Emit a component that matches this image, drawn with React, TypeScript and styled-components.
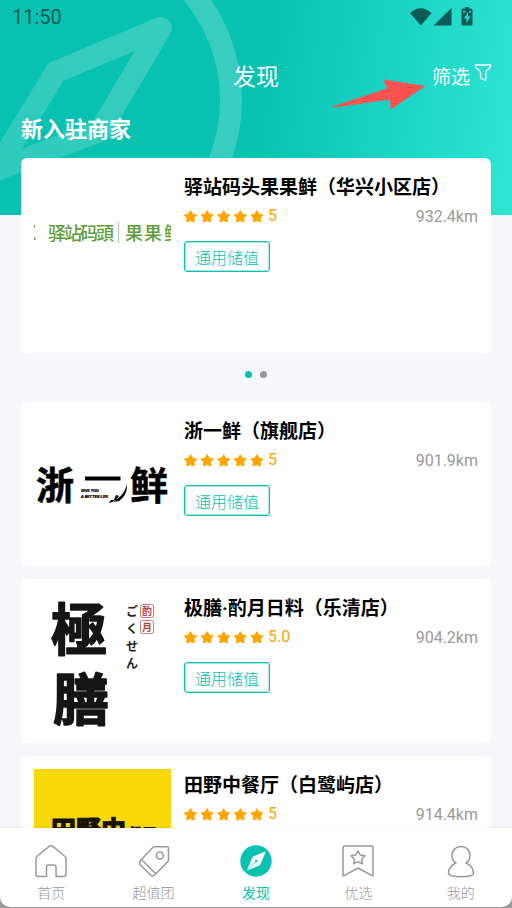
import React, { ReactNode, useState } from "react";
import styled, { createGlobalStyle } from "styled-components";

const teal = "#07c1b1";
const amber = "#ffa500";
const grey = "#999999";
const ink = "#0d5b54";

const GlobalStyle = createGlobalStyle`
  * { box-sizing: border-box; }
  html, body { margin: 0; padding: 0; }
  body {
    background: #9a9a9a;
    color: #000;
    font-family: Roboto, "Noto Sans CJK SC", sans-serif;
  }
  button {
    margin: 0;
    padding: 0;
    border: 0;
    background: none;
    color: inherit;
    font: inherit;
    cursor: pointer;
  }
`;

const Screen = styled.div`
  display: flex;
  flex-direction: column;
  height: 100vh;
  overflow: hidden;
`;

const Scroller = styled.main`
  position: relative;
  flex: 1;
  min-height: 0;
  overflow: hidden;
  background:
    linear-gradient(98deg, ${teal} 50%, #2de4d3 97%) top / 100% 215px no-repeat,
    #f6f6fb;
`;

const Compass = styled.svg`
  position: absolute;
  top: 0;
  left: 0;
  display: block;
`;

const PointerArrow = styled.svg`
  position: absolute;
  top: 78px;
  right: 86px;
  display: block;
  pointer-events: none;
`;

const Content = styled.div`
  position: relative;
  padding: 0 21px;
`;

const StatusBar = styled.div`
  display: flex;
  align-items: center;
  justify-content: space-between;
  height: 34px;
  margin-left: -9px;
  padding-right: 17px;
  color: ${ink};
  font-size: 20px;
  line-height: 34px;
`;

const StatusIcons = styled.svg`
  display: block;
`;

const Header = styled.header`
  display: grid;
  grid-template-columns: 1fr auto 1fr;
  align-items: center;
  height: 85px;
  padding-top: 3px;
  color: #fff;
`;

const PageTitle = styled.h1`
  grid-column: 2;
  margin: 0;
  font-size: 23px;
  font-weight: 400;
  line-height: 32px;
`;

const FilterButton = styled.button`
  justify-self: end;
  display: flex;
  align-items: flex-start;
  gap: 4px;
  margin-right: -1px;
  font-size: 19px;
  line-height: 28px;
`;

const FilterIcon = styled.svg`
  display: block;
`;

const SectionTitle = styled.h2`
  margin: 0 0 17px;
  color: #fff;
  font-size: 22px;
  font-weight: 700;
  line-height: 22px;
`;

const Card = styled.article<{ $featured?: boolean }>`
  display: flex;
  gap: 13px;
  min-height: ${(p) => (p.$featured ? 195 : 164)}px;
  padding: 13px;
  border-radius: 6px;
  background: #fff;
`;

const Logo = styled.svg`
  display: block;
  flex: none;
  overflow: hidden;
`;

const Info = styled.div`
  flex: 1;
  min-width: 0;
`;

const ShopName = styled.h3`
  margin: 0;
  padding-top: 2px;
  font-size: 19px;
  font-weight: 700;
  line-height: 29px;
  white-space: nowrap;
`;

const Meta = styled.div`
  display: flex;
  align-items: center;
  justify-content: space-between;
  height: 28px;
  margin-bottom: 11px;
  font-size: 16px;
  line-height: 28px;
`;

const Rating = styled.div`
  display: flex;
  align-items: center;
  gap: 4px;
  color: ${amber};
`;

const Distance = styled.span`
  padding-top: 2px;
  color: ${grey};
`;

const Tag = styled.span`
  display: inline-block;
  height: 31px;
  padding: 2px 10px 0;
  border: 1px solid ${teal};
  border-radius: 3px;
  box-shadow: inset 0 0 0 1px rgba(7, 193, 177, 0.35);
  color: ${teal};
  font-size: 16px;
  font-weight: 300;
  line-height: 30px;
`;

const Dots = styled.div`
  display: flex;
  justify-content: center;
  align-items: center;
  gap: 8px;
  height: 49px;
  padding-bottom: 7px;
`;

const Dot = styled.button<{ $on?: boolean }>`
  width: 7px;
  height: 7px;
  border-radius: 50%;
  background: ${(p) => (p.$on ? teal : grey)};
`;

const List = styled.section`
  display: flex;
  flex-direction: column;
  gap: 13px;
`;

const TabBar = styled.nav`
  position: relative;
  display: flex;
  height: 79px;
  flex: none;
  margin-bottom: 1px;
  border-radius: 0 0 10px 10px;
  background: #fff;
  box-shadow: 0 -1px 3px rgba(0, 0, 0, 0.06);
`;

const Tab = styled.a<{ $active?: boolean }>`
  flex: 1;
  display: flex;
  flex-direction: column;
  align-items: center;
  gap: 6px;
  padding-top: 16px;
  color: ${(p) => (p.$active ? teal : grey)};
  font-size: 14px;
  font-weight: ${(p) => (p.$active ? 400 : 300)};
  line-height: 18px;
  text-decoration: none;
`;

const TabIcon = styled.svg`
  display: block;
  fill: none;
  stroke: currentColor;
  stroke-width: 1.5;
  stroke-linejoin: round;
  stroke-linecap: round;
`;

const starPath =
  "M6.5 0.6 L8.5 4 L12.6 4.9 L9.9 7.9 L10.3 12 L6.5 10.5 L2.7 12 L3.1 7.9 L0.4 4.9 L4.5 4 Z";

function Stars() {
  return (
    <svg width="80" height="13" viewBox="0 0 80 13" aria-hidden="true">
      {[0, 1, 2, 3, 4].map((i) => (
        <path
          key={i}
          d={starPath}
          transform={`translate(${i * 16.6} 0)`}
          fill={amber}
          stroke={amber}
          strokeWidth="0.9"
          strokeLinejoin="round"
        />
      ))}
    </svg>
  );
}

function LogoFrame({ label, children }: { label: string; children: ReactNode }) {
  return (
    <Logo width="137" height="137" viewBox="0 0 137 137" role="img" aria-label={label}>
      {children}
    </Logo>
  );
}

const cjk = '"Noto Sans CJK SC", sans-serif';
const cjkTc = '"Noto Sans CJK TC", sans-serif';
const cjkJp = '"Noto Sans CJK JP", sans-serif';

const YizhanLogo = () => (
  <LogoFrame label="驿站码頭 果果鲜">
    <g fill="#5d9d3b" fontFamily={cjk} fontSize="18" fontWeight="500">
      <path d="M0 54 l1 0 0 3 -1 -1z M0 66 l1.500 1 0 2 -1.500 0z" />
      <text y="69" x="14 30 46 62">驿站码頭</text>
      <path d="M84.500 51 v21" stroke="#b4d1a4" strokeWidth="1.200" />
      <text y="69" x="91 110 130">果果鲜</text>
    </g>
  </LogoFrame>
);

const ZheyixianLogo = () => (
  <LogoFrame label="浙一鲜">
    <g fontFamily={cjk} fontWeight="700" fontSize="38" stroke="#000" strokeWidth="0.6">
      <text y="84" x="2">浙</text>
      <text y="84" x="96">鲜</text>
    </g>
    <path d="M51 61.500 H86.500 V65.500 H51 Z" />
    <path d="M92.500 69 C92 77 85 84 77 87.500 L85 86 C91 82 94 75 92.500 69 Z M82 80 l3 1 -5 6 -5 1 2 -3 h3 z" />
    <g fontFamily='Roboto, sans-serif' fontWeight="900" fontSize="4" stroke="#000" strokeWidth="0.2">
      <text x="47" y="77">GIVE YOU</text>
      <text x="47" y="83">A BETTER LIFE</text>
    </g>
  </LogoFrame>
);

const JishanLogo = () => (
  <LogoFrame label="極膳 ごくせん 酌月">
    <g
      fontFamily={cjkTc}
      fontWeight="700"
      fontSize="56"
      fill="#151515"
      stroke="#151515"
      strokeWidth="1.500"
      strokeLinejoin="round"
    >
      <text x="17" y="58">極</text>
      <text x="19" y="128">膳</text>
    </g>
    <g fontFamily={cjkJp} fontWeight="700" fontSize="12" fill="#222">
      <text x="92" y="24">ご</text>
      <text x="92" y="41">く</text>
      <text x="92" y="59">せ</text>
      <text x="92" y="76">ん</text>
    </g>
    <g fill="none" stroke="#c97b78" strokeWidth="1">
      <rect x="106.500" y="12.500" width="13" height="13" rx="2" />
      <rect x="106.500" y="28.500" width="13" height="13" rx="2" />
    </g>
    <g fontFamily={cjk} fontWeight="700" fontSize="10" fill="#b5413e">
      <text x="108" y="23">酌</text>
      <text x="108" y="39">月</text>
    </g>
  </LogoFrame>
);

const TianyeLogo = () => (
  <LogoFrame label="田野中餐厅">
    <rect width="137" height="137" fill="#f8d806" />
    <g fontFamily={cjk} fontWeight="900" fill="#15130a">
      <text x="17" y="70" fontSize="25" stroke="#15130a" strokeWidth="0.8">田野中</text>
      <text x="94" y="69" fontSize="14">餐厅</text>
    </g>
  </LogoFrame>
);

type Shop = { name: string; score: string; distance: string; logo: ReactNode };

const featured: Shop = {
  name: "驿站码头果果鲜（华兴小区店）",
  score: "5",
  distance: "932.4km",
  logo: <YizhanLogo />,
};

const shops: Shop[] = [
  { name: "浙一鲜（旗舰店）", score: "5", distance: "901.9km", logo: <ZheyixianLogo /> },
  { name: "极膳·酌月日料（乐清店）", score: "5.0", distance: "904.2km", logo: <JishanLogo /> },
  { name: "田野中餐厅（白鹭屿店）", score: "5", distance: "914.4km", logo: <TianyeLogo /> },
];

function ShopCard({ shop, large }: { shop: Shop; large?: boolean }) {
  return (
    <Card $featured={large}>
      {shop.logo}
      <Info>
        <ShopName>{shop.name}</ShopName>
        <Meta>
          <Rating>
            <Stars />
            {shop.score}
          </Rating>
          <Distance>{shop.distance}</Distance>
        </Meta>
        <Tag>通用储值</Tag>
      </Info>
    </Card>
  );
}

const tabs: { label: string; icon: ReactNode }[] = [
  {
    label: "首页",
    icon: (
      <path d="M14.800 2.700 Q17 1 19.200 2.700 L30.500 12 Q32 13.200 32 15 V30 Q32 32.500 29.500 32.500 H22 V23 Q22 21 20 21 H14.500 Q12.500 21 12.500 23 V32.500 H4.500 Q2 32.500 2 30 V15 Q2 13.200 3.500 12 Z" />
    ),
  },
  {
    label: "超值团",
    icon: (
      <>
        <path d="M17.500 2.800 H30 Q31.500 2.800 31.500 4.300 V15.500 Q31.500 17 30.500 18 L17.500 31 Q15.500 32.800 13.500 31 L3.500 21 Q1.500 18.500 3.500 16.500 L15.500 3.800 Q16.300 2.800 17.500 2.800 Z M4.500 15.500 L18.500 29.500" />
        <circle cx="22.800" cy="11.500" r="3.500" />
      </>
    ),
  },
  {
    label: "发现",
    icon: (
      <>
        <circle cx="17" cy="17" r="15.700" fill="currentColor" stroke="none" />
        <path d="M26 8 L14 13 L8.500 26 L20.500 21 Z" fill="#fff" stroke="#fff" strokeWidth="0.8" />
        <circle cx="17.200" cy="17" r="1.200" fill={teal} stroke="none" />
        <path d="M9 25.500 L16 18.500" stroke={teal} strokeWidth="0.7" />
      </>
    ),
  },
  {
    label: "优选",
    icon: (
      <>
        <path d="M3.500 2 H30.500 Q32 2 32 3.500 V31 Q32 32.200 31 31.600 L17 24 L3 31.600 Q2 32.200 2 31 V3.500 Q2 2 3.500 2 Z" />
        <path d="M17 6.800 L19.200 11 L24 11.800 L20.600 15.200 L21.300 19.800 L17 17.700 L12.700 19.800 L13.400 15.200 L10 11.800 L14.800 11 Z" />
      </>
    ),
  },
  {
    label: "我的",
    icon: (
      <path d="M17 2.500 C11.500 2.500 8 6.500 8 11.500 C8 14.800 9.500 17.500 12 19 C7.500 20.500 4.500 25 4.500 29 C4.500 31.500 10 32.800 17 32.800 C24 32.800 29.500 31.500 29.500 29 C29.500 25 26.500 20.500 22 19 C24.500 17.500 26 14.800 26 11.500 C26 6.500 22.500 2.500 17 2.500 Z" />
    ),
  },
];

export default function App() {
  const [slide, setSlide] = useState(0);
  return (
    <>
      <GlobalStyle />
      <Screen lang="zh-CN">
        <Scroller>
          <Compass width="260" height="215" viewBox="0 0 260 215" aria-hidden="true">
            <defs>
              <linearGradient id="needle" gradientUnits="userSpaceOnUse" x1="160" y1="30" x2="0" y2="180">
                <stop offset="0" stopColor="#fff" stopOpacity="0.19" />
                <stop offset="1" stopColor="#fff" stopOpacity="0.16" />
              </linearGradient>
            </defs>
            <g fill="none" stroke="url(#needle)" strokeWidth="22" strokeLinejoin="round">
              <circle cx="65" cy="100" r="166" stroke="#fff" strokeOpacity="0.2" />
              <path d="M161 28 L56 72 L-4 170 L100 131 Z" />
            </g>
          </Compass>
          <Content>
            <StatusBar>
              <span>11:50</span>
              <StatusIcons width="64" height="20" viewBox="0 0 64 20" fill={ink} aria-hidden="true">
                <path d="M0 6 Q10.500 -3.500 21.500 6 L10.800 18.500 Z" />
                <path d="M41.500 1 V18.500 H23.500 Z" />
                <path d="M55 0 H59 V1.500 H61 Q62.500 1.500 62.500 3 V17 Q62.500 18.500 61 18.500 H53 Q51.500 18.500 51.500 17 V3 Q51.500 1.500 53 1.500 H55 Z" />
                <path d="M58 5 L54 11.500 H56.500 V16 L60.500 9.500 H58 Z M53 4 h2.500 v1.500 h-2.500 z M59 4 h2 v1.500 h-2 z" fill="#27dbca" />
              </StatusIcons>
            </StatusBar>
            <Header>
              <PageTitle>发现</PageTitle>
              <FilterButton type="button">
                筛选
                <FilterIcon width="18" height="18" viewBox="0 0 18 18" fill="none" stroke="#fff" strokeWidth="1.300" strokeLinejoin="round" aria-hidden="true">
                  <path d="M1.500 1 H16.500 Q17 2.500 16 3.500 L11.800 7.500 V15.500 Q11.500 16.500 10.500 16 L7 14.500 Q6.500 14 6.500 13.500 V7.500 L2 3.500 Q1 2.500 1.500 1 Z" />
                </FilterIcon>
              </FilterButton>
            </Header>
            <SectionTitle>新入驻商家</SectionTitle>
            <ShopCard shop={featured} large />
            <Dots>
              {[0, 1].map((i) => (
                <Dot key={i} type="button" $on={slide === i} aria-label={`第${i + 1}页`} onClick={() => setSlide(i)} />
              ))}
            </Dots>
            <List>
              {shops.map((s) => (
                <ShopCard key={s.name} shop={s} />
              ))}
            </List>
          </Content>
          <PointerArrow width="93" height="32" viewBox="0 0 93 32" aria-hidden="true">
            <path d="M1 28 L54 10.500 L50.500 1.500 L92.500 8 L57.500 31.500 L57 21.500 L1 29.500 Z" fill="#fb5250" />
          </PointerArrow>
        </Scroller>
        <TabBar>
          {tabs.map((t) => (
            <Tab key={t.label} href="#" $active={t.label === "发现"} aria-current={t.label === "发现" ? "page" : undefined}>
              <TabIcon width="34" height="34" viewBox="0 0 34 34" aria-hidden="true">
                {t.icon}
              </TabIcon>
              {t.label}
            </Tab>
          ))}
        </TabBar>
      </Screen>
    </>
  );
}
